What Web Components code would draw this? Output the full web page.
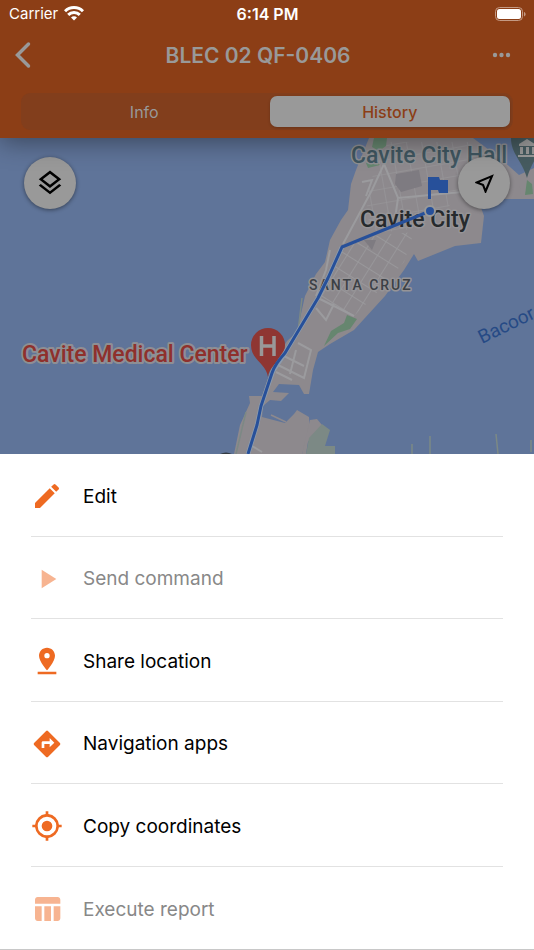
<!DOCTYPE html>
<html lang="en">
<head>
<meta charset="utf-8">
<meta name="viewport" content="width=device-width, initial-scale=1">
<title>BLEC 02 QF-0406</title>
<style>
  html, body { margin: 0; }
  body {
    font-family: Inter, "Liberation Sans", sans-serif;
    background: #fff;
    color: #000;
  }
</style>
</head>
<body>

<device-screen>
  <app-header slot="header" heading="BLEC 02 QF-0406">
    <tab-item>Info</tab-item>
    <tab-item selected>History</tab-item>
  </app-header>
  <route-map slot="map"></route-map>
  <action-sheet slot="sheet">
    <action-item icon="edit">Edit</action-item>
    <action-item icon="play" disabled>Send command</action-item>
    <action-item icon="pin">Share location</action-item>
    <action-item icon="directions">Navigation apps</action-item>
    <action-item icon="target">Copy coordinates</action-item>
    <action-item icon="table" disabled>Execute report</action-item>
  </action-sheet>
</device-screen>

<script>
  const icons = {
    edit: '<path d="M3 17.250V21h3.750L17.810 9.940l-3.750-3.750L3 17.250zM20.710 7.040a1 1 0 0 0 0-1.410l-2.340-2.340a1 1 0 0 0-1.410 0l-1.830 1.830 3.750 3.750 1.830-1.830z"/>',
    play: '<path d="M8 5v14l11-7z"/>',
    pin: '<path d="M18 8c0-3.310-2.690-6-6-6S6 4.690 6 8c0 4.500 6 11 6 11s6-6.500 6-11zm-8 0a2 2 0 1 1 4 0 2 2 0 0 1-4 0zM5 20v2h14v-2H5z"/>',
    directions: '<path d="M21.710 11.290l-9-9a1 1 0 0 0-1.410 0l-9 9a1 1 0 0 0 0 1.410l9 9c.39.39 1.020.39 1.410 0l9-9a1 1 0 0 0 0-1.410zM14 14.500V12h-4v3H8v-4c0-.55.45-1 1-1h5V7.500l3.500 3.500-3.500 3.500z"/>',
    target: '<path d="M12 8a4 4 0 1 0 0 8 4 4 0 0 0 0-8zm8.940 3A8.990 8.990 0 0 0 13 3.060V1h-2v2.060A8.990 8.990 0 0 0 3.060 11H1v2h2.060A8.990 8.990 0 0 0 11 20.940V23h2v-2.060A8.990 8.990 0 0 0 20.940 13H23v-2h-2.060zM12 19a7 7 0 1 1 0-14 7 7 0 0 1 0 14z"/>',
    table: '<path d="M10 10.020h5V21h-5V10.020zM17 21h3c1.100 0 2-.9 2-2v-9h-5v11zm3-18H5c-1.100 0-2 .9-2 2v3h19V5c0-1.100-.9-2-2-2zM3 19c0 1.100.9 2 2 2h3V10H3v9z"/>',
    layers: '<path d="M11.990 18.540l-7.370-5.730L3 14.070l9 7 9-7-1.630-1.270-7.380 5.740zM12 16l7.360-5.730L21 9l-9-7-9 7 1.630 1.270L12 16zm0-11.470L17.740 9 12 13.470 6.260 9 12 4.530z"/>',
    locate: '<path d="M17.270 6.730l-4.240 10.130-1.320-3.420-.32-.83-.82-.32-3.430-1.330 10.130-4.230M21 3L3 10.530v.98l6.840 2.650L12.480 21h.98L21 3z"/>'
  };

  function svg(name) {
    return `<svg viewBox="0 0 24 24" aria-hidden="true">${icons[name]}</svg>`;
  }

  class DeviceScreen extends HTMLElement {
    constructor() {
      super();
      this.attachShadow({ mode: 'open' });
    }

    connectedCallback() {
      this.shadowRoot.innerHTML = `
        <style>
          :host { display: flex; flex-direction: column; min-height: 100vh; }
          ::slotted([slot="sheet"]) { flex: 1; }
        </style>
        <slot name="header"></slot>
        <slot name="map"></slot>
        <slot name="sheet"></slot>
      `;
    }
  }
  customElements.define('device-screen', DeviceScreen);

  class StatusBar extends HTMLElement {
    constructor() {
      super();
      this.attachShadow({ mode: 'open' });
    }

    connectedCallback() {
      this.shadowRoot.innerHTML = `
        <style>
          :host {
            display: grid;
            grid-template-columns: 1fr auto 1fr;
            align-items: center;
            height: 27px;
            padding: 0 8px 0 9px;
            color: #fff;
            font-size: 15px;
          }
          .carrier { display: flex; align-items: center; gap: 6px; }
          .time { font-size: 16px; font-weight: 600; }
          .battery { justify-self: end; }
          svg { display: block; }
        </style>
        <div class="carrier">
          <span>Carrier</span>
          <svg width="20" height="15" viewBox="0 0 20 15" fill="none" stroke="#fff" stroke-width="3" aria-hidden="true">
            <path d="M1 5.300a12.700 12.700 0 0 1 18 0"/>
            <path d="M4.200 8.900a8.200 8.200 0 0 1 11.600 0"/>
            <path d="M10 14.500l-3-3a4.200 4.200 0 0 1 6 0z" fill="#fff" stroke="none"/>
          </svg>
        </div>
        <span class="time">6:14 PM</span>
        <svg class="battery" width="31" height="14" viewBox="0 0 31 14" aria-hidden="true">
          <rect x=".5" y=".5" width="27" height="13" rx="4" fill="none" stroke="#c49a84"/>
          <rect x="2" y="2" width="24" height="10" rx="2.500" fill="#fff"/>
          <path d="M29 5v4.500c1-.3 1.600-1.200 1.600-2.200S30 5.300 29 5z" fill="#c49a84"/>
        </svg>
      `;
    }
  }
  customElements.define('status-bar', StatusBar);

  class AppHeader extends HTMLElement {
    constructor() {
      super();
      this.attachShadow({ mode: 'open' });
    }

    connectedCallback() {
      this.shadowRoot.innerHTML = `
        <style>
          :host {
            display: block;
            position: relative;
            z-index: 1;
            background: #8c3e16;
            color: #999;
            box-shadow: 0 4px 24px rgba(0, 0, 0, .4);
          }
          .bar {
            display: grid;
            grid-template-columns: 48px 1fr 66px;
            align-items: center;
            height: 56px;
            padding: 0 8px;
          }
          h1 { margin: 0; font-size: 21px; font-weight: 600; text-align: center; }
          button {
            display: flex;
            padding: 0;
            border: 0;
            background: none;
            color: inherit;
          }
          .more { justify-self: end; padding-right: 15px; }
          .back { padding-left: 6px; }
          .tabs {
            display: grid;
            grid-template-columns: 1fr 1fr;
            gap: 5px;
            margin: 10px 21px 0;
            padding: 3px;
            border-radius: 9px;
            background: #823e1c;
          }
          .foot { height: 8px; }
        </style>
        <status-bar></status-bar>
        <div class="bar">
          <button class="back" aria-label="Back">
            <svg width="18" height="28" viewBox="0 0 18 28" fill="none" stroke="currentColor" stroke-width="3.500" aria-hidden="true">
              <path d="M14.500 3L3.500 14l11 11" stroke-linecap="round"/>
            </svg>
          </button>
          <h1>${this.getAttribute('heading')}</h1>
          <button class="more" aria-label="More">
            <svg width="20" height="6" viewBox="0 0 20 6" fill="currentColor" aria-hidden="true">
              <circle cx="4" cy="3" r="2.200"/><circle cx="10.500" cy="3" r="2.200"/><circle cx="17" cy="3" r="2.200"/>
            </svg>
          </button>
        </div>
        <div class="tabs" role="tablist"><slot></slot></div>
        <div class="foot"></div>
      `;
    }
  }
  customElements.define('app-header', AppHeader);

  class TabItem extends HTMLElement {
    constructor() {
      super();
      this.attachShadow({ mode: 'open' });
    }

    connectedCallback() {
      var selected = this.hasAttribute('selected');
      this.shadowRoot.innerHTML = `
        <style>
          :host { display: block; }
          button {
            display: block;
            width: 100%;
            height: 31px;
            padding: 0;
            border: 0;
            border-radius: 7px;
            background: none;
            color: #999;
            font: inherit;
            font-size: 16px;
          }
          :host([selected]) button {
            background: #999;
            color: #8c3e16;
            font-weight: 500;
            box-shadow: 0 1px 3px rgba(0, 0, 0, .2);
          }
        </style>
        <button role="tab" aria-selected="${selected}"><slot></slot></button>
      `;
    }
  }
  customElements.define('tab-item', TabItem);

  class MapButton extends HTMLElement {
    constructor() {
      super();
      this.attachShadow({ mode: 'open' });
    }

    connectedCallback() {
      this.shadowRoot.innerHTML = `
        <style>
          :host { display: block; }
          button {
            display: grid;
            place-items: center;
            width: 52px;
            height: 52px;
            padding: 0;
            border: 0;
            border-radius: 50%;
            background: #999;
            box-shadow: 0 1px 4px rgba(0, 0, 0, .45);
          }
          svg { width: var(--icon-size, 30px); height: var(--icon-size, 30px); }
        </style>
        <button aria-label="${this.getAttribute('label')}">${svg(this.getAttribute('icon'))}</button>
      `;
    }
  }
  customElements.define('map-button', MapButton);

  class RouteMap extends HTMLElement {
    constructor() {
      super();
      this.attachShadow({ mode: 'open' });
    }

    connectedCallback() {
      this.shadowRoot.innerHTML = `
        <style>
          :host {
            display: block;
            position: relative;
            height: 316px;
            overflow: hidden;
            background: #5f7499;
          }
          .map { display: block; width: 100%; height: 100%; }
          .controls {
            position: absolute;
            inset: 19px 24px auto;
            display: flex;
            justify-content: space-between;
          }
          .locate { --icon-size: 25px; }
          text { font-family: Roboto, sans-serif; paint-order: stroke; stroke-linejoin: round; }
        </style>
        <svg class="map" viewBox="0 138 534 316" preserveAspectRatio="xMidYMid slice">
          <defs>
            <pattern id="blocks" width="13" height="16" patternUnits="userSpaceOnUse" patternTransform="rotate(32)">
              <path d="M0 0H13M0 0V16" stroke="#99989b" stroke-width="1.800" fill="none"/>
            </pattern>
            <pattern id="uptown" width="15" height="14" patternUnits="userSpaceOnUse" patternTransform="rotate(-10)">
              <path d="M0 0H15M0 0V14" stroke="#969598" stroke-width="1.600" fill="none"/>
            </pattern>
          </defs>

          <!-- land -->
          <path fill="#8d898d" d="M369 138L356 170 351 184 348 210 341 220 330 240 325 262 316 274 305 296 297 332 287 341 272 366 262 396 249 396 250 403 240 425 234 454H302L310 432 309 417 297 410 294 414 285 423 262 417 263 406 270 400 281 401 289 393 273 392 279 384 299 385 304 394 309 394 313 370 318 352 330 344 354 330 385 296 404 270 414 254 418 261 455 246 481 243 484 216 478 199 534 199V168L519 175 500 158 473 138z"/>
          <path fill="#8d898d" d="M519 184h15v14h-12z"/>
          <path fill="#8d898d" d="M310 420L317 419 322 425 308 442 306 454H302z"/>
          <path fill="none" stroke="#8d898d" stroke-width="1.500" d="M271 415L286 422"/>

          <!-- streets -->
          <path fill="url(#blocks)" d="M344 246L372 236 414 232 404 262 370 300 354 316 331 306 318 298z"/>
          <path fill="url(#uptown)" d="M384 142H470L478 170 470 190 420 228 370 234 366 196z"/>
          <g fill="none" stroke="#9b9b9e" stroke-width="2">
            <path d="M384 164L372 190 343 244M330 250L326 270 316 296"/>
            <path d="M362 182L372 180 366 196M384 164L398 198 462 192M398 198L394 226"/>
            <path d="M298 343L311 350 304 378 272 362M296 350L290 374M284 356L304 366M276 372L292 380"/>
            <path d="M316 308L326 320 334 304M318 298L354 316"/>
            <path d="M252 446L262 452"/>
          </g>
          <path fill="#7e7b81" d="M396 174L419 170 422 186 401 192 395 184zM364 240L376 240 372 250z"/>

          <!-- parks -->
          <g fill="#66866f">
            <path d="M374 138h13l-1 8-7 5-7-4z"/>
            <path d="M366 163l8-4 6 6-12 3z"/>
            <path d="M324 346L331 331 344 323 347 315 357 319 350 329 338 333z"/>
            <path d="M527 180l5 4 1 10-8 1z"/>
          </g>
          <path fill="#7c8985" d="M306 454L309 438 322 424 330 430 325 446H335V454z"/>
          <path fill="none" stroke="#7c8985" stroke-width="1.500" d="M412 444v10M430 436v18M496 434l2 20M531 440v12M302 298l-4 34M246 412l-10 42"/>

          <!-- place labels -->
          <g font-weight="500">
            <text x="351" y="163" font-size="23" fill="#3f5660" stroke="#8f9093" stroke-width="3">Cavite City Hall</text>
            <text x="360" y="227" font-size="23" fill="#262a2d" stroke="#969497" stroke-width="3">Cavite City</text>
            <text x="309" y="290" font-size="14" letter-spacing="2" fill="#3c4045" stroke="#969497" stroke-width="3">SANTA CRUZ</text>
            <text x="22" y="362" font-size="23" fill="#8f302c" stroke="#8e8f94" stroke-width="4">Cavite Medical Center</text>
            <text x="482" y="344" font-size="19" font-weight="400" fill="#264a85" transform="rotate(-26 482 344)">Bacoor</text>
          </g>

          <!-- city hall marker -->
          <path fill="#465b60" d="M511 138c0 16 11 22 16 40 3-10 7-18 12-24v-16z"/>
          <path fill="#999" d="M519 144l8-5 8 5v2h-16zM520 147h3v7h-3zM526 147h3v7h-3zM532 147h3v7h-3zM518 155h18v2h-18z"/>

          <!-- hospital marker -->
          <path fill="#8f3632" d="M268 377c-2-14-17-17-17-32a17 17 0 0 1 34 0c0 15-15 18-17 32z"/>
          <path fill="none" stroke="#999" stroke-width="3.500" d="M261.500 336v20M274 336v20M261.500 346H274"/>

          <!-- route -->
          <path fill="none" stroke="#8d9cae" stroke-width="4.500" d="M342 247L328 278 318 298 285 353 273 371 261 406 257 425 248 454"/>
          <path fill="none" stroke="#27509a" stroke-width="3" stroke-linejoin="round" d="M430 211L342 247 328 278 318 298 285 353Q275 364 272 373L261 406 257 425 248 454"/>
          <circle cx="430" cy="211" r="5" fill="#27509a" stroke="#999" stroke-width="2"/>
          <path fill="#27509a" d="M428 177h11l1 3h8v13h-9l-1-3h-7v9h-3z"/>
          <path fill="#333a40" d="M220 454q6-3 12 0z"/>
        </svg>
        <div class="controls">
          <map-button icon="layers" label="Map layers"></map-button>
          <map-button class="locate" icon="locate" label="My location"></map-button>
        </div>
      `;
    }
  }
  customElements.define('route-map', RouteMap);

  class ActionSheet extends HTMLElement {
    constructor() {
      super();
      this.attachShadow({ mode: 'open' });
    }

    connectedCallback() {
      this.shadowRoot.innerHTML = `
        <style>
          :host {
            display: grid;
            grid-auto-rows: 1fr;
            border-bottom: 1px solid #c8c8c8;
            background: #fff;
          }
          ::slotted(:not(:last-child)) { border-bottom: 1px solid #e2e2e2; }
          ::slotted(*) { margin: 0 31px; }
        </style>
        <slot></slot>
      `;
    }
  }
  customElements.define('action-sheet', ActionSheet);

  class ActionItem extends HTMLElement {
    constructor() {
      super();
      this.attachShadow({ mode: 'open' });
    }

    connectedCallback() {
      var disabled = this.hasAttribute('disabled') ? 'disabled' : '';
      this.shadowRoot.innerHTML = `
        <style>
          :host { display: grid; min-height: 64px; }
          button {
            display: flex;
            align-items: center;
            gap: 20px;
            padding: 3px 0 0;
            border: 0;
            background: none;
            color: #000;
            font: inherit;
            font-size: 19px;
            text-align: left;
          }
          svg { width: 32px; height: 32px; fill: #ee6a22; }
          button:disabled { color: #888; }
          button:disabled svg { fill: #f7b491; }
        </style>
        <button ${disabled}>${svg(this.getAttribute('icon'))}<span><slot></slot></span></button>
      `;
    }
  }
  customElements.define('action-item', ActionItem);
</script>
</body>
</html>
